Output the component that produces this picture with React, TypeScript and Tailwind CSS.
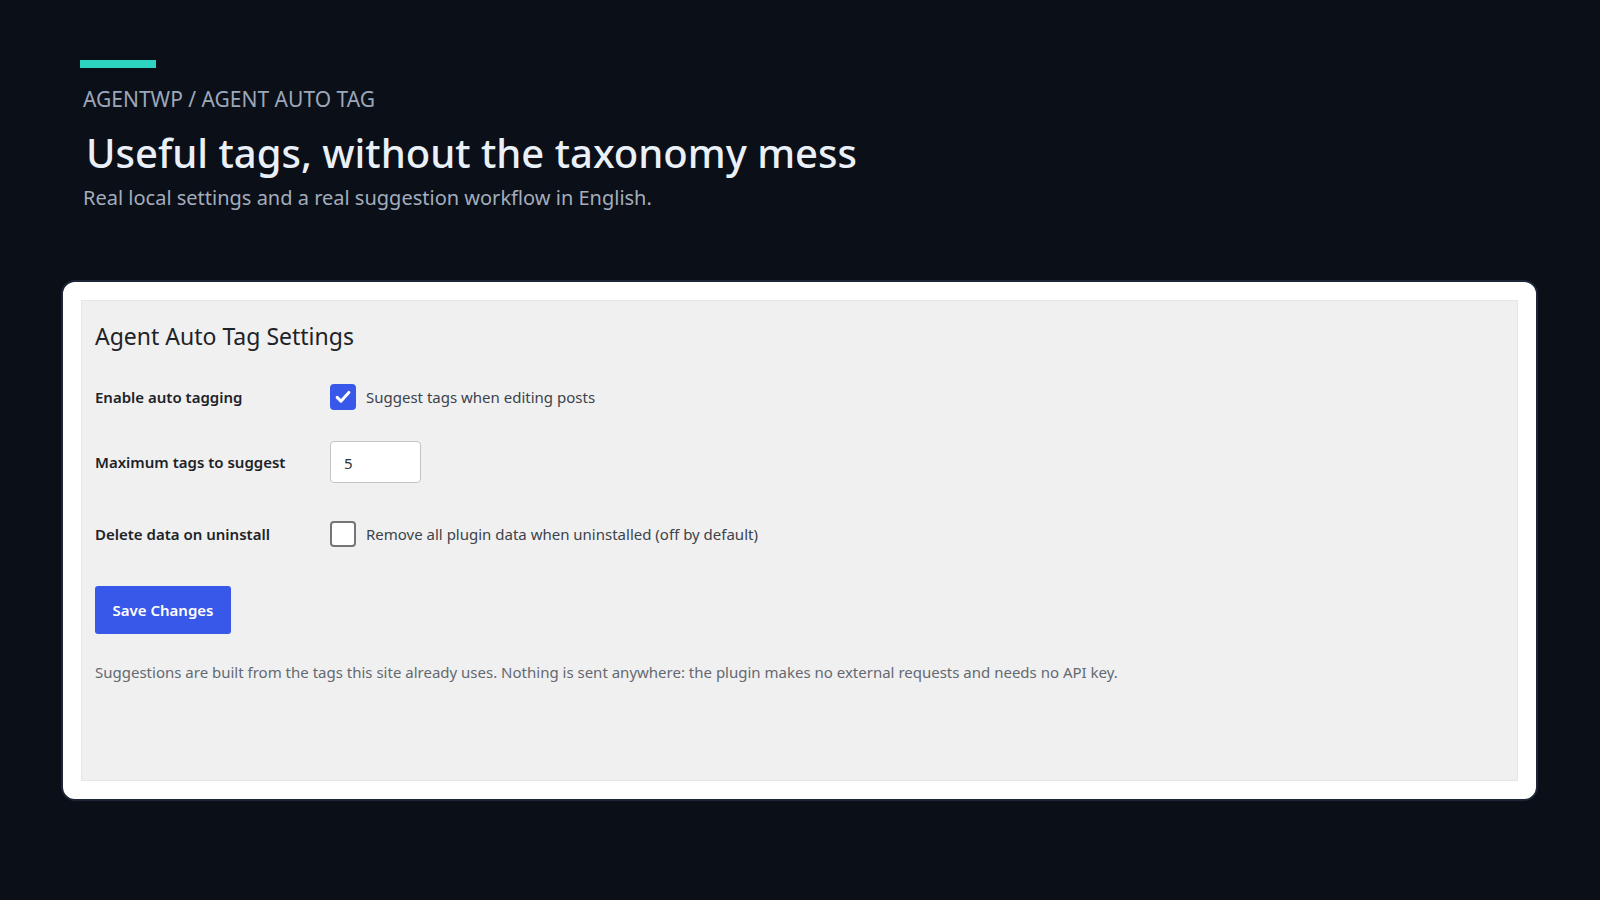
import React, { useState } from "react";

const font = { fontFamily: '"Noto Sans", "Open Sans", sans-serif' };

const CheckBox: React.FC<{ checked: boolean; onChange: () => void }> = ({ checked, onChange }) => (
  <button
    type="button"
    onClick={onChange}
    className={
      checked
        ? "flex h-[26px] w-[26px] items-center justify-center rounded-[4px] bg-[#3858e9]"
        : "flex h-[26px] w-[26px] items-center justify-center rounded-[4px] border-2 border-[#757575] bg-white"
    }
  >
    {checked && (
      <svg viewBox="0 0 24 24" className="h-[20px] w-[20px]" fill="none" stroke="white" strokeWidth="3.6" strokeLinecap="round" strokeLinejoin="round">
        <path d="M5 12.5l4.5 4.5L19 6.5" />
      </svg>
    )}
  </button>
);

export default function App() {
  const [autoTag, setAutoTag] = useState(true);
  const [deleteData, setDeleteData] = useState(false);
  const [maxTags, setMaxTags] = useState("5");

  return (
    <div className="min-h-screen bg-[#0b0f17] pt-[60px]" style={font}>
      <div className="pl-[80px]">
        <div className="h-2 w-[76px] bg-[#2dd4c0]" />
        <div className="mt-[19px] pl-[3px] text-[21px] leading-[24px] text-[#9ba7ba] uppercase">
          AgentWP / Agent Auto Tag
        </div>
        <h1 className="mt-[18px] pl-[6px] text-[40px] font-medium leading-[48px] text-[#eaf0f8]">
          Useful tags, without the taxonomy mess
        </h1>
        <p className="mt-[8px] pl-[3px] text-[20px] leading-[26px] text-[#a3adbd]">
          Real local settings and a real suggestion workflow in English.
        </p>
      </div>

      <div className="ml-[61px] mt-[69px] w-[1477px] rounded-[14px] border-2 border-[#1c2636] bg-white p-[18px]">
        <div className="h-[481px] border border-[#e6e6e6] bg-[#f0f0f1] px-[13px] pt-[20px]">
          <h2 className="text-[23px] leading-[30px] text-[#1d2327]">Agent Auto Tag Settings</h2>

          <div className="mt-[33px] grid grid-cols-[235px_1fr] items-center text-[15px] text-[#1d2327]">
            <div className="font-semibold">Enable auto tagging</div>
            <label className="flex items-center gap-[10px] text-[#3c434a]">
              <CheckBox checked={autoTag} onChange={() => setAutoTag(!autoTag)} />
              <span>Suggest tags when editing posts</span>
            </label>

            <div className="mt-[31px] font-semibold">Maximum tags to suggest</div>
            <div className="mt-[31px]">
              <input
                type="text"
                value={maxTags}
                onChange={(e) => setMaxTags(e.target.value)}
                className="h-[42px] w-[91px] rounded-[4px] border border-[#c3c4c7] bg-white px-[13px] pt-[2px] text-[15px] text-[#2c3338] outline-none"
              />
            </div>

            <div className="mt-[38px] font-semibold">Delete data on uninstall</div>
            <label className="mt-[38px] flex items-center gap-[10px] text-[#3c434a]">
              <CheckBox checked={deleteData} onChange={() => setDeleteData(!deleteData)} />
              <span>Remove all plugin data when uninstalled (off by default)</span>
            </label>
          </div>

          <button
            type="button"
            className="mt-[39px] h-[48px] w-[136px] rounded-[3px] bg-[#3858e9] text-[15px] font-semibold text-white"
          >
            Save Changes
          </button>

          <p className="mt-[27px] text-[15px] text-[#646970]">
            Suggestions are built from the tags this site already uses. Nothing is sent anywhere: the plugin makes no external requests and needs no API key.
          </p>
        </div>
      </div>
    </div>
  );
}
